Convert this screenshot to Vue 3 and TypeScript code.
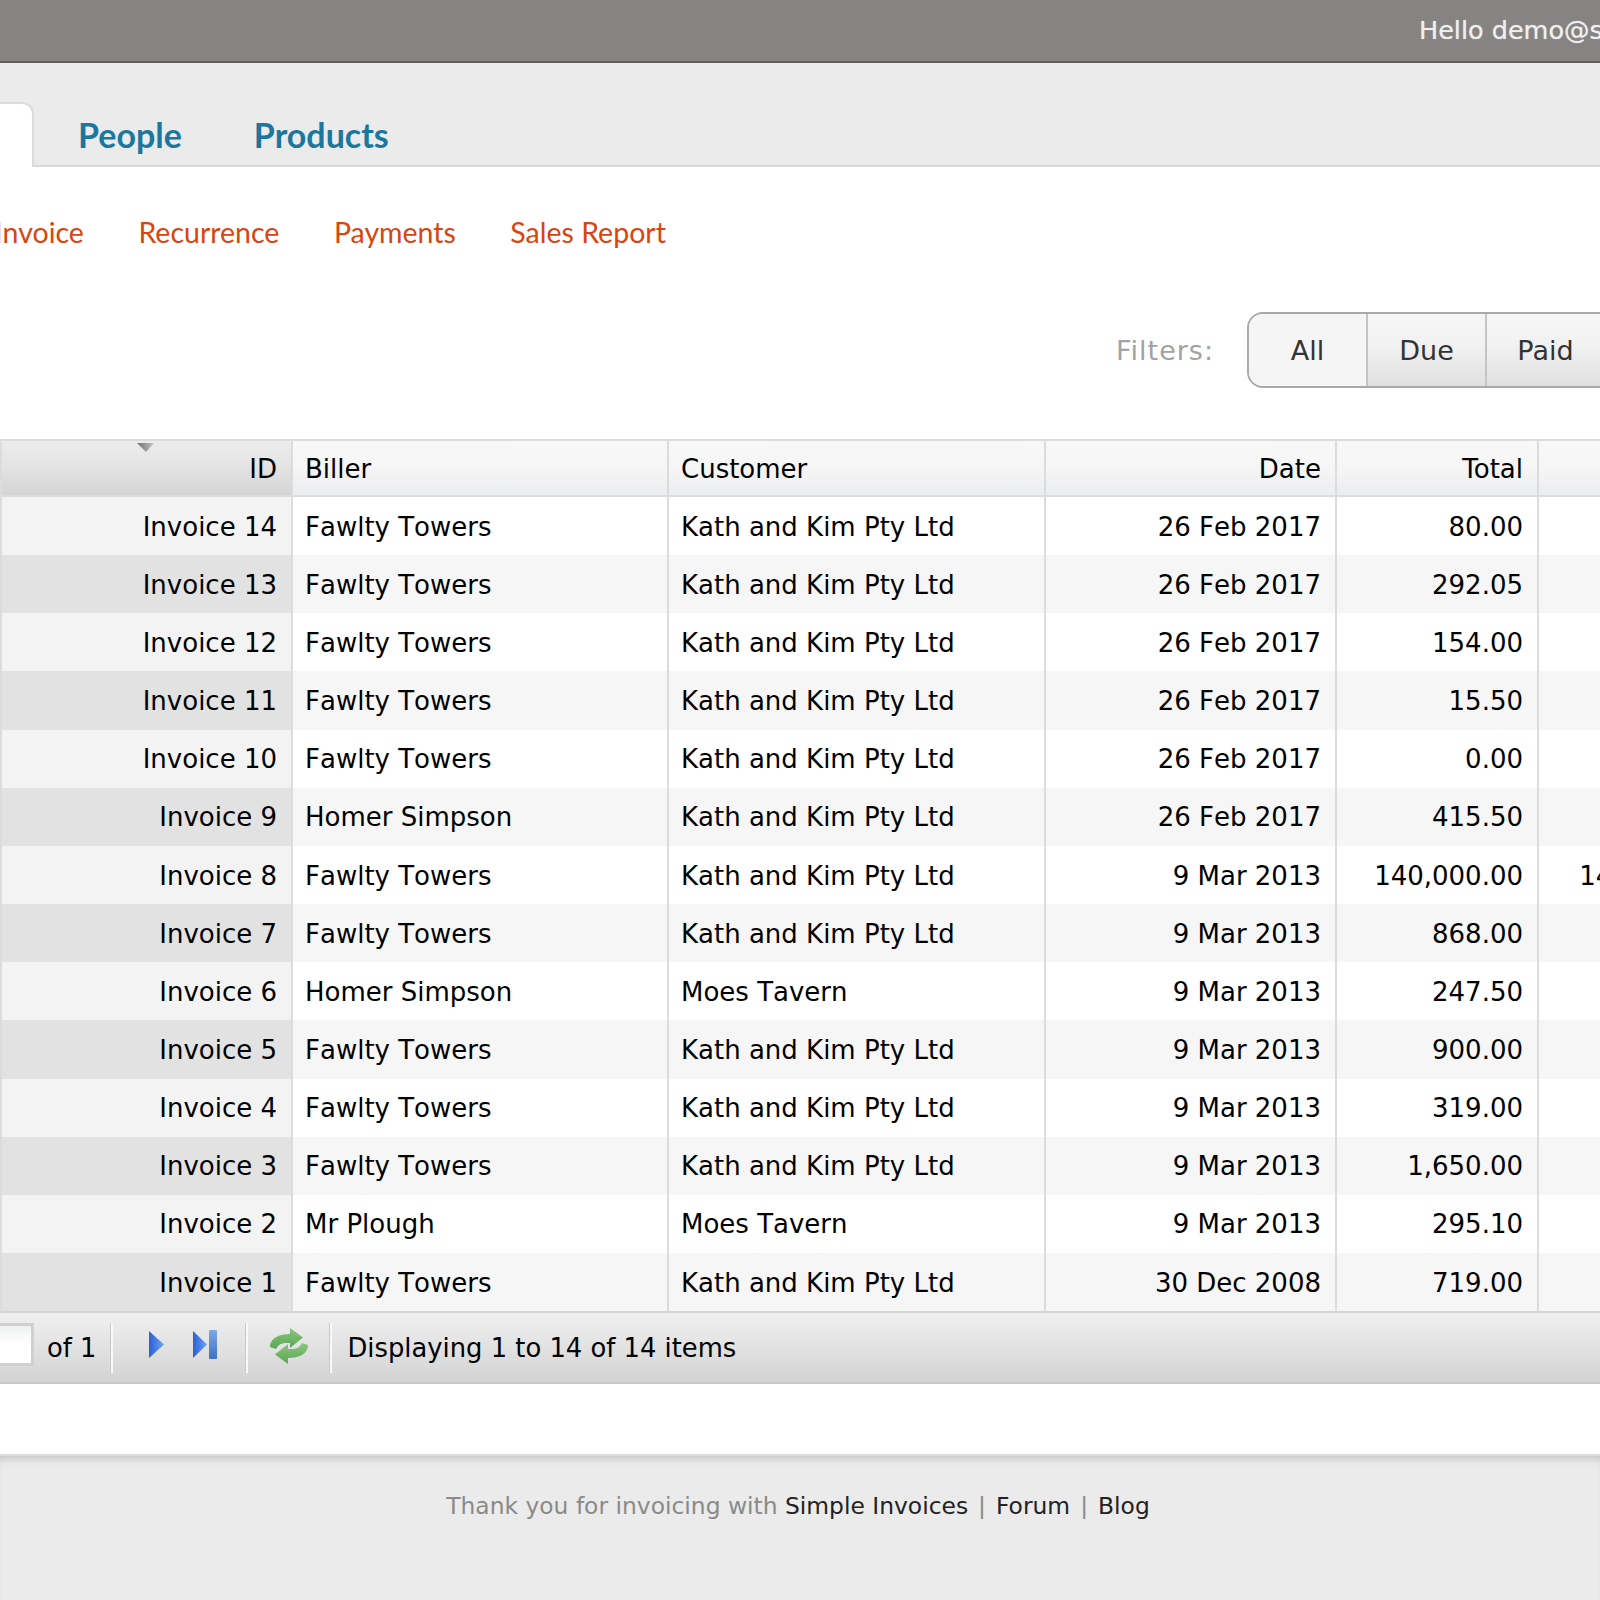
<script setup lang="ts">
interface Invoice {
  id: string
  biller: string
  customer: string
  date: string
  total: string
  owing: string
}

const mk = (n: number, biller: string, customer: string, date: string, total: string, owing = '0.00'): Invoice => ({
  id: 'Invoice ' + n,
  biller,
  customer,
  date,
  total,
  owing,
})

const kath = 'Kath and Kim Pty Ltd'
const moes = 'Moes Tavern'
const fawlty = 'Fawlty Towers'
const homer = 'Homer Simpson'

const invoices: Invoice[] = [
  mk(14, fawlty, kath, '26 Feb 2017', '80.00'),
  mk(13, fawlty, kath, '26 Feb 2017', '292.05'),
  mk(12, fawlty, kath, '26 Feb 2017', '154.00'),
  mk(11, fawlty, kath, '26 Feb 2017', '15.50'),
  mk(10, fawlty, kath, '26 Feb 2017', '0.00'),
  mk(9, homer, kath, '26 Feb 2017', '415.50'),
  mk(8, fawlty, kath, '9 Mar 2013', '140,000.00', '140,000.00'),
  mk(7, fawlty, kath, '9 Mar 2013', '868.00'),
  mk(6, homer, moes, '9 Mar 2013', '247.50'),
  mk(5, fawlty, kath, '9 Mar 2013', '900.00'),
  mk(4, fawlty, kath, '9 Mar 2013', '319.00'),
  mk(3, fawlty, kath, '9 Mar 2013', '1,650.00'),
  mk(2, 'Mr Plough', moes, '9 Mar 2013', '295.10'),
  mk(1, fawlty, kath, '30 Dec 2008', '719.00'),
]
</script>

<template>
  <div class="page">
    <header class="topbar"><span class="hello">Hello demo@simpleinvoices.org</span></header>

    <div class="tabs">
      <div class="tab-active"></div>
      <a class="tab">People</a>
      <a class="tab">Products</a>
    </div>

    <nav class="subnav">
      <a>New Invoice</a>
      <a>Recurrence</a>
      <a>Payments</a>
      <a>Sales Report</a>
    </nav>

    <div class="filters">
      <span class="filters-label">Filters:</span>
      <div class="btn-group">
        <span class="btn btn-on">All</span>
        <span class="btn">Due</span>
        <span class="btn">Paid</span>
        <span class="btn">Draft</span>
      </div>
    </div>

    <div class="grid">
      <div class="row head">
        <div class="cell num sorted">
          <svg class="sort-arrow" width="17" height="9" viewBox="0 0 17 9">
            <defs>
              <linearGradient id="arrow" x1="0" y1="0" x2="1" y2="0">
                <stop offset="0" stop-color="#6f6f6f" />
                <stop offset="1" stop-color="#c4c4c4" />
              </linearGradient>
            </defs>
            <path d="M0 0h17L9 9z" fill="url(#arrow)" />
          </svg>
          ID
        </div>
        <div class="cell">Biller</div>
        <div class="cell">Customer</div>
        <div class="cell num">Date</div>
        <div class="cell num">Total</div>
        <div class="cell num">Owing</div>
      </div>
      <div v-for="(inv, i) in invoices" :key="inv.id" class="row" :class="{ alt: i % 2 === 1 }">
        <div class="cell num sorted">{{ inv.id }}</div>
        <div class="cell">{{ inv.biller }}</div>
        <div class="cell">{{ inv.customer }}</div>
        <div class="cell num">{{ inv.date }}</div>
        <div class="cell num">{{ inv.total }}</div>
        <div class="cell num">{{ inv.owing }}</div>
      </div>
    </div>

    <div class="pager">
      <div class="page-input"></div>
      <span class="of">of 1</span>
      <i class="sep sep1"></i>
      <svg class="ico ico-next" width="15" height="27" viewBox="0 0 15 27">
        <defs>
          <linearGradient id="blue" x1="0" y1="0" x2="1" y2="0">
            <stop offset="0" stop-color="#2a5fd6" />
            <stop offset="1" stop-color="#6aa4f2" />
          </linearGradient>
          <linearGradient id="bar" x1="0" y1="0" x2="0" y2="1">
            <stop offset="0" stop-color="#7fa9e6" />
            <stop offset="1" stop-color="#3c6fc4" />
          </linearGradient>
        </defs>
        <path d="M0 0l15 13.5L0 27z" fill="url(#blue)" />
      </svg>
      <svg class="ico ico-last" width="24" height="29" viewBox="0 0 24 29">
        <path d="M0 1l14 13.5L0 28z" fill="url(#blue)" />
        <rect x="16" y="0" width="8" height="29" rx="1" fill="url(#bar)" />
      </svg>
      <i class="sep sep2"></i>
      <svg class="ico ico-refresh" width="38" height="36" viewBox="0 0 38 36">
        <defs>
          <linearGradient id="green" x1="0" y1="0" x2="0" y2="1">
            <stop offset="0" stop-color="#8ac67e" />
            <stop offset="1" stop-color="#5aa655" />
          </linearGradient>
        </defs>
        <path d="M0 19C0 10 9 6 20 6V0l13 9.5L20 20v-5c-7 0-11 0-14 6z" fill="url(#green)" />
        <path d="M38 17C38 26 29 30 18 30v6L5 26.500 18 16v5c7 0 11 0 14-6z" fill="url(#green)" />
      </svg>
      <i class="sep sep3"></i>
      <span class="status">Displaying 1 to 14 of 14 items</span>
    </div>

    <div class="spacer"></div>

    <footer class="foot">
      Thank you for invoicing with <a>Simple Invoices</a><span class="bar">|</span><a>Forum</a><span class="bar">|</span><a>Blog</a>
    </footer>
  </div>
</template>

<style>
html, body {
  margin: 0;
  background: #fff;
}
</style>

<style scoped>
.page {
  width: 1600px;
  height: 1600px;
  overflow: hidden;
  display: flex;
  flex-direction: column;
  font-family: "DejaVu Sans", Verdana, sans-serif;
  color: #000;
}

.topbar {
  height: 61px;
  flex: none;
  background: #858482;
  border-bottom: 2px solid #5f5f5f;
  padding-left: 1419px;
  white-space: nowrap;
  line-height: 61px;
}
.hello {
  color: #efefef;
  font-size: 25.5px;
  text-shadow: 0 0 1px rgba(255, 255, 255, 0.6);
}

.tabs {
  height: 102px;
  flex: none;
  display: flex;
  align-items: flex-end;
  background: #ebebeb;
  border-bottom: 2px solid #d8d8d8;
  font-family: Lato, "Open Sans", sans-serif;
}
.tab-active {
  width: 32px;
  height: 63px;
  background: #fff;
  border: 2px solid #dcdcdc;
  border-left: 0;
  border-bottom: 0;
  border-radius: 0 12px 0 0;
  margin-bottom: -2px;
  margin-right: 44px;
}
.tab {
  color: #1c779f;
  font-size: 34px;
  font-weight: 700;
  line-height: 60px;
  margin-right: 72px;
}

.subnav {
  height: 129px;
  flex: none;
  display: flex;
  align-items: center;
  gap: 54.5px;
  margin-left: -70.500px;
  font-family: Lato, "Open Sans", sans-serif;
  font-size: 28.5px;
  color: #d9450f;
  white-space: nowrap;
}

.filters {
  height: 76px;
  flex: none;
  display: flex;
  align-items: center;
  margin-top: 16px;
  padding-left: 1116px;
  white-space: nowrap;
}
.filters-label {
  color: #a2a2a2;
  font-size: 27px;
  letter-spacing: 1px;
  width: 131px;
  flex: none;
}
.btn-group {
  display: flex;
  height: 72px;
  border: 2px solid #a9a9a9;
  border-radius: 16px;
  overflow: hidden;
  flex: none;
}
.btn {
  width: 117px;
  border-left: 2px solid #c4c4c4;
  display: flex;
  align-items: center;
  justify-content: center;
  font-size: 27px;
  color: #333;
  background: linear-gradient(#f6f6f6, #f1f1f1 45%, #e0e0e0);
}
.btn-on {
  border-left: 0;
  background: #f5f5f5;
}

.grid {
  margin-top: 51px;
  width: 1760px;
  flex: none;
  border-top: 2px solid #dcdcdc;
  border-bottom: 2px solid #d4d4d4;
  border-left: 2px solid #dcdcdc;
  box-sizing: border-box;
  font-kerning: none;
}
.row {
  display: grid;
  grid-template-columns: 291px 376px 377px 291px 202px 205px;
  height: 58.16px;
  font-size: 26px;
  white-space: nowrap;
  background: #fff;
}
.row.alt {
  background: #f6f6f6;
}
.row.head {
  height: 54px;
  background: linear-gradient(#f8f8f8, #f6f6f6 45%, #ecedef);
  border-bottom: 2px solid #dcdcdc;
  font-kerning: normal;
}
.cell {
  position: relative;
  display: flex;
  align-items: center;
  padding: 1px 12px 0;
  border-right: 2px solid #dcdcdc;
  overflow: hidden;
}
.cell.num {
  justify-content: flex-end;
  padding-right: 14px;
}
.cell.sorted {
  background: #f3f3f3;
}
.alt .cell.sorted {
  background: #e2e2e2;
}
.head .cell.sorted {
  background: linear-gradient(#ececec, #e4e4e4 45%, #d4d4d4);
}
.sort-arrow {
  position: absolute;
  left: 135px;
  top: 2px;
}

.pager {
  height: 71px;
  flex: none;
  display: flex;
  align-items: center;
  box-sizing: border-box;
  border-bottom: 2px solid #c9c9c9;
  background: linear-gradient(#f0f0f0, #d3d3d3);
  font-size: 25.8px;
  white-space: nowrap;
}
.page-input {
  width: 34px;
  height: 43px;
  margin-top: -7px;
  box-sizing: border-box;
  background: linear-gradient(#eef0f0, #fff 50%);
  border: 3px solid #d0d0d0;
  border-left: 0;
}
.of {
  margin-left: 13px;
}
.sep {
  width: 2px;
  height: 50px;
  background: #f8f8f8;
  box-shadow: -1px 0 0 #c9c9c9;
  flex: none;
}
.sep1 {
  margin-left: 15px;
}
.ico {
  flex: none;
  margin-top: -7px;
}
.ico-next {
  margin-left: 36px;
}
.ico-last {
  margin-left: 29px;
}
.sep2 {
  margin-left: 29px;
}
.ico-refresh {
  margin-left: 22px;
  margin-top: -4px;
}
.sep3 {
  margin-left: 22px;
}
.status {
  margin-left: 15px;
}

.spacer {
  height: 70px;
  flex: none;
}

.foot {
  flex: 1;
  background: #ebebeb;
  border-top: 2px solid #dcdcdc;
  box-shadow: inset 0 8px 8px -6px #bdbdbd;
  color: #8a8a8a;
  font-size: 23.4px;
  text-align: center;
  padding: 36px 4px 0 0;
  white-space: nowrap;
}
.foot a {
  color: #222;
}
.bar {
  margin: 0 10px;
}
</style>
